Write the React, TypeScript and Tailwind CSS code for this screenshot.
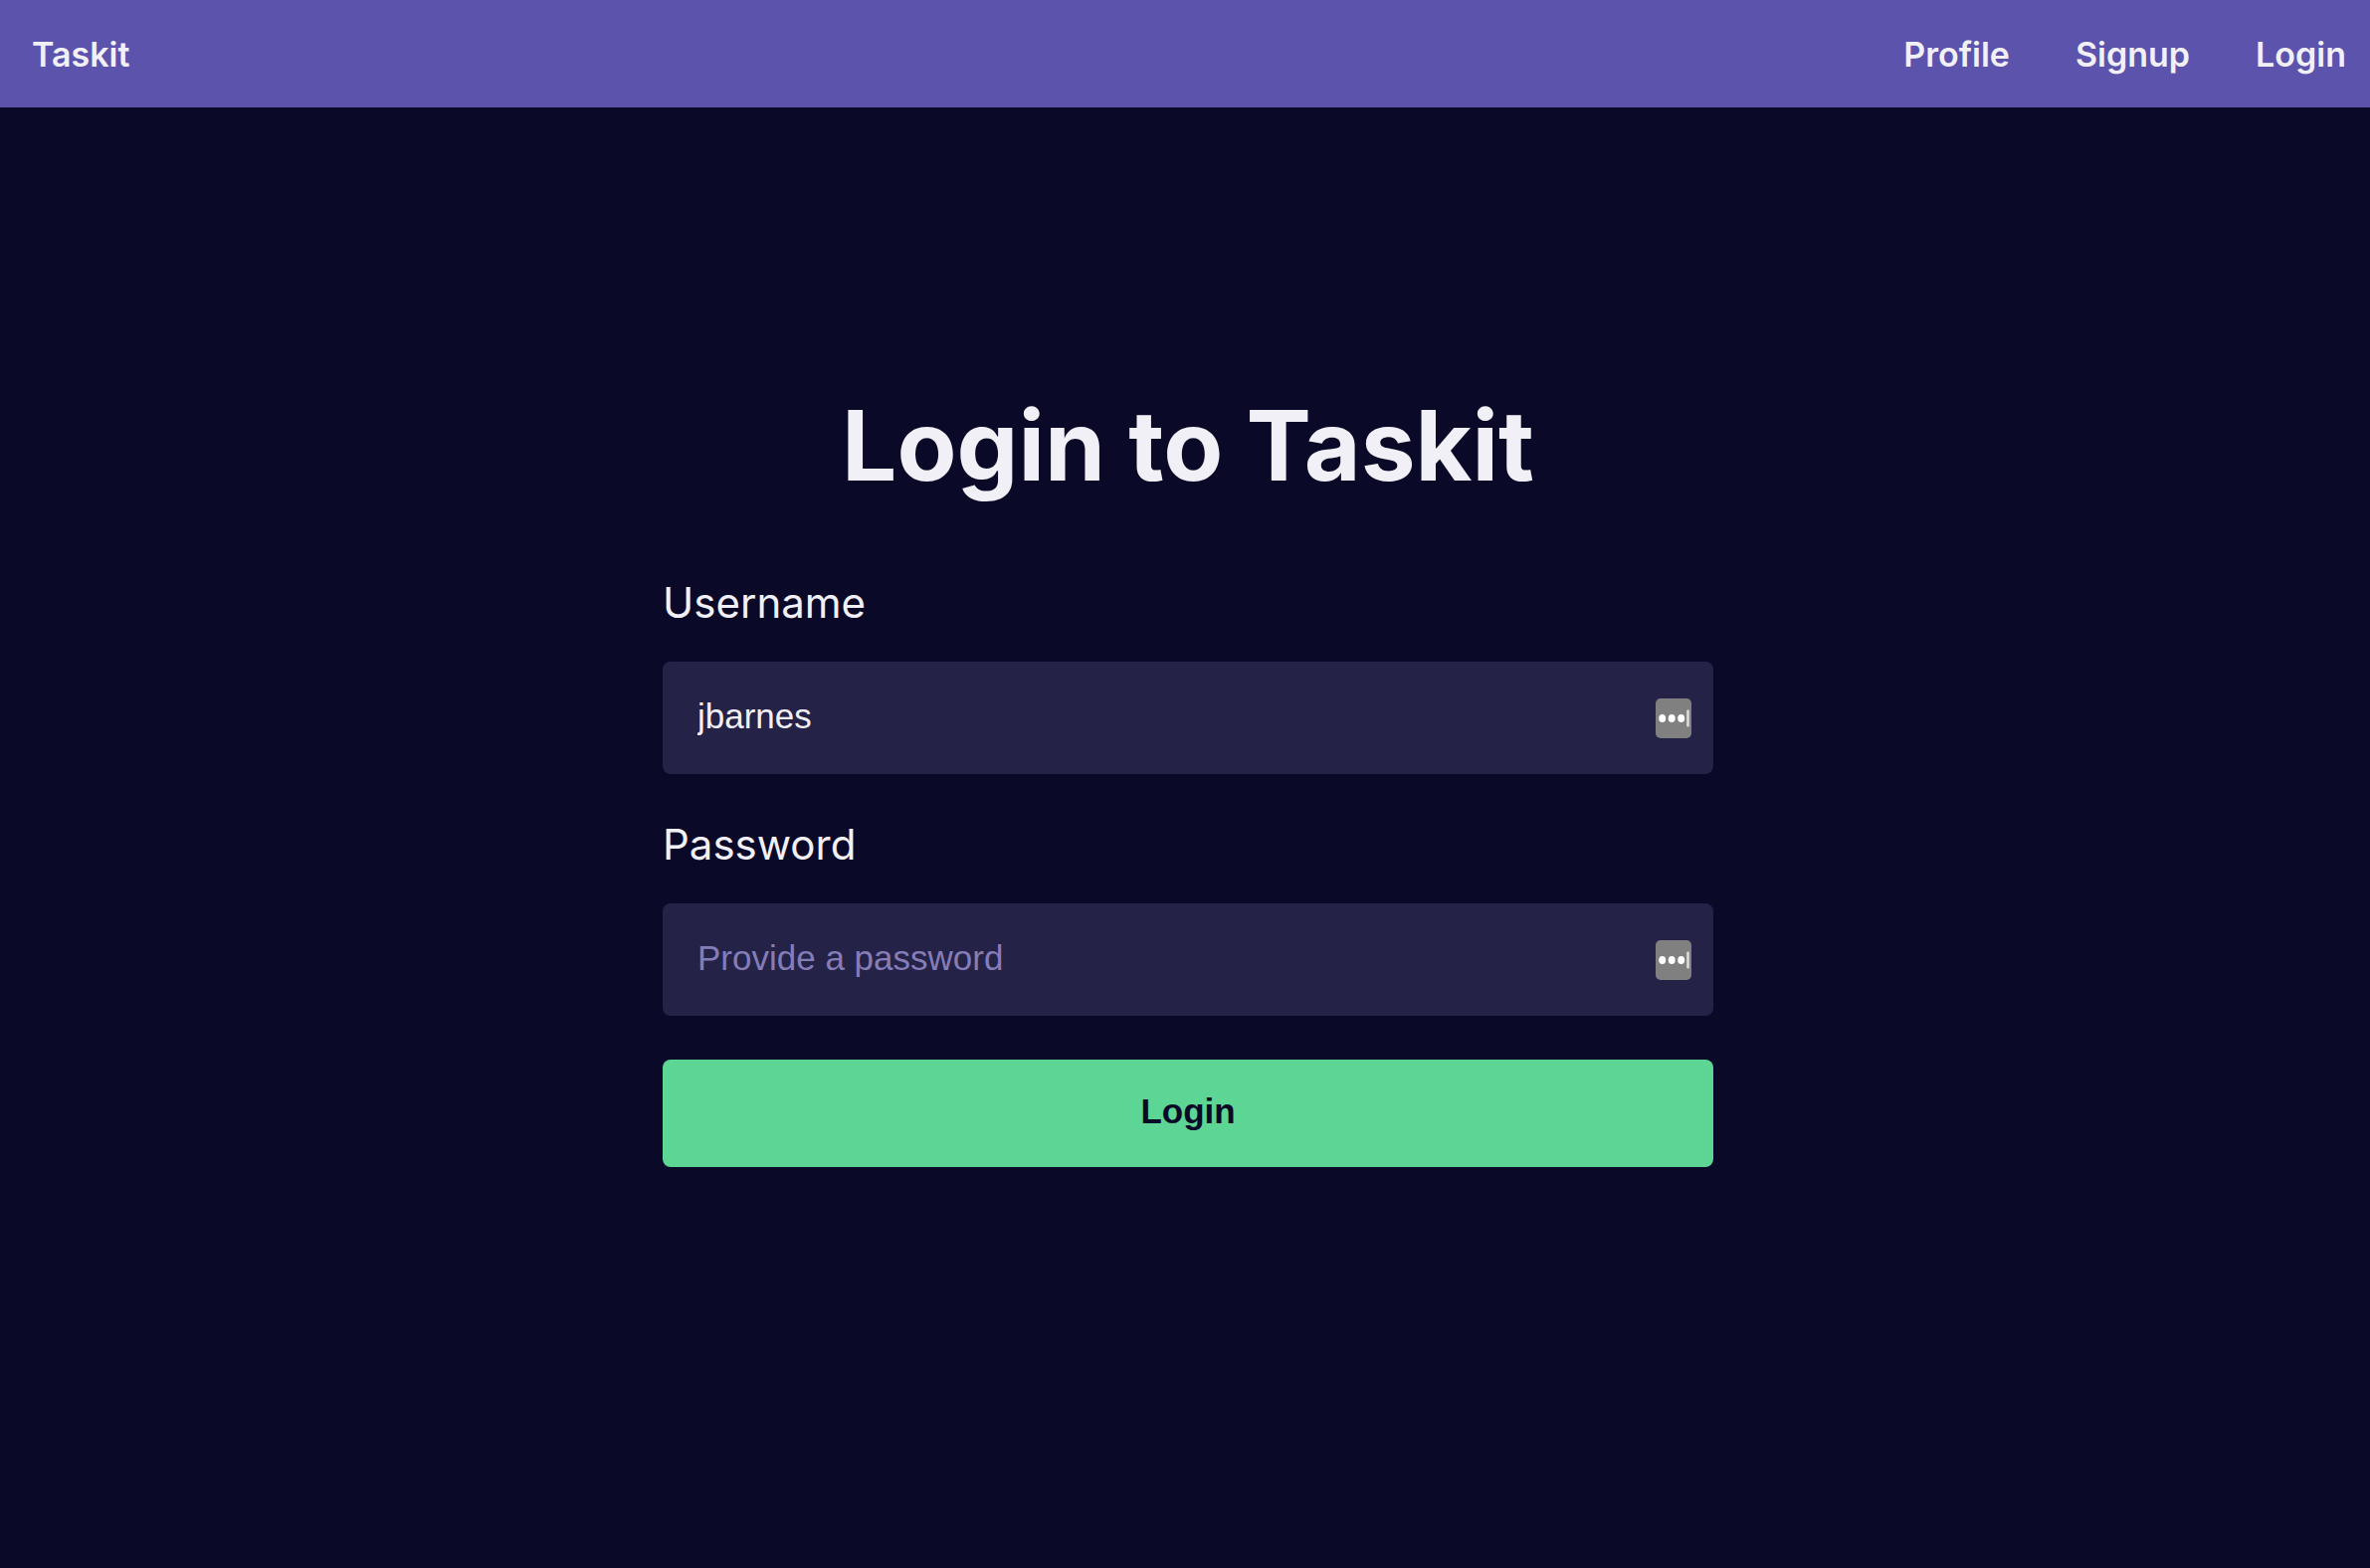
import { useState } from "react";

const links = ["Profile", "Signup", "Login"];

function AutofillIcon() {
  return (
    <svg aria-hidden="true" viewBox="0 0 36 40" className="pointer-events-none absolute right-[22px] top-1/2 h-10 w-9 -translate-y-1/2">
      <rect width="36" height="40" rx="5" fill="#808080" />
      <ellipse cx="6.7" cy="20" rx="3.5" ry="4" fill="#fff" />
      <ellipse cx="16.2" cy="20" rx="3.5" ry="4" fill="#fff" />
      <ellipse cx="25.7" cy="20" rx="3.5" ry="4" fill="#fff" />
      <rect x="31.2" y="11.5" width="2.6" height="17" rx="1" fill="#dcdcdc" />
    </svg>
  );
}

type FieldProps = {
  id: string;
  label: string;
  type: string;
  placeholder: string;
  initial: string;
};

function Field({ id, label, type, placeholder, initial }: FieldProps) {
  const [value, setValue] = useState(initial);
  return (
    <div className="flex flex-col gap-8">
      <label htmlFor={id} className="text-[42px] leading-[54px]">
        {label}
      </label>
      <div className="relative">
        <input
          id={id}
          type={type}
          value={value}
          placeholder={placeholder}
          onChange={(e) => setValue(e.target.value)}
          className="block h-[113px] w-full rounded-lg bg-[#242246] pr-20 pb-1 pl-[35px] font-['Liberation_Sans',sans-serif] text-[35px] text-[#f2f0f7] outline-none placeholder:text-[#857db8] placeholder:opacity-100"
        />
        <AutofillIcon />
      </div>
    </div>
  );
}

export default function App() {
  return (
    <div className="flex min-h-screen flex-col bg-[#0a0927] font-['Inter',sans-serif] text-[#f2f0f7]">
      <header className="flex h-[108px] items-center justify-between bg-[#5c53ad] pr-6 pl-8 text-[34px] font-semibold">
        <a href="#home">Taskit</a>
        <nav className="flex gap-[66px]">
          {links.map((link) => (
            <a key={link} href={`#${link.toLowerCase()}`}>
              {link}
            </a>
          ))}
        </nav>
      </header>
      <main className="flex flex-1 flex-col items-center justify-center pl-[6px]">
        <form className="flex w-full max-w-[1056px] flex-col pb-[126px]" onSubmit={(e) => e.preventDefault()}>
          <h1 className="mb-17 text-center text-[98px] leading-[126px] font-bold">Login to Taskit</h1>
          <div className="flex flex-col gap-11">
            <Field id="username" label="Username" type="text" placeholder="Provide a username" initial="jbarnes" />
            <Field id="password" label="Password" type="password" placeholder="Provide a password" initial="" />
            <button type="submit" className="h-[108px] rounded-lg bg-[#5dd595] pb-1 font-['Liberation_Sans',sans-serif] text-[35px] font-bold text-[#0a0927]">
              Login
            </button>
          </div>
        </form>
      </main>
    </div>
  );
}
